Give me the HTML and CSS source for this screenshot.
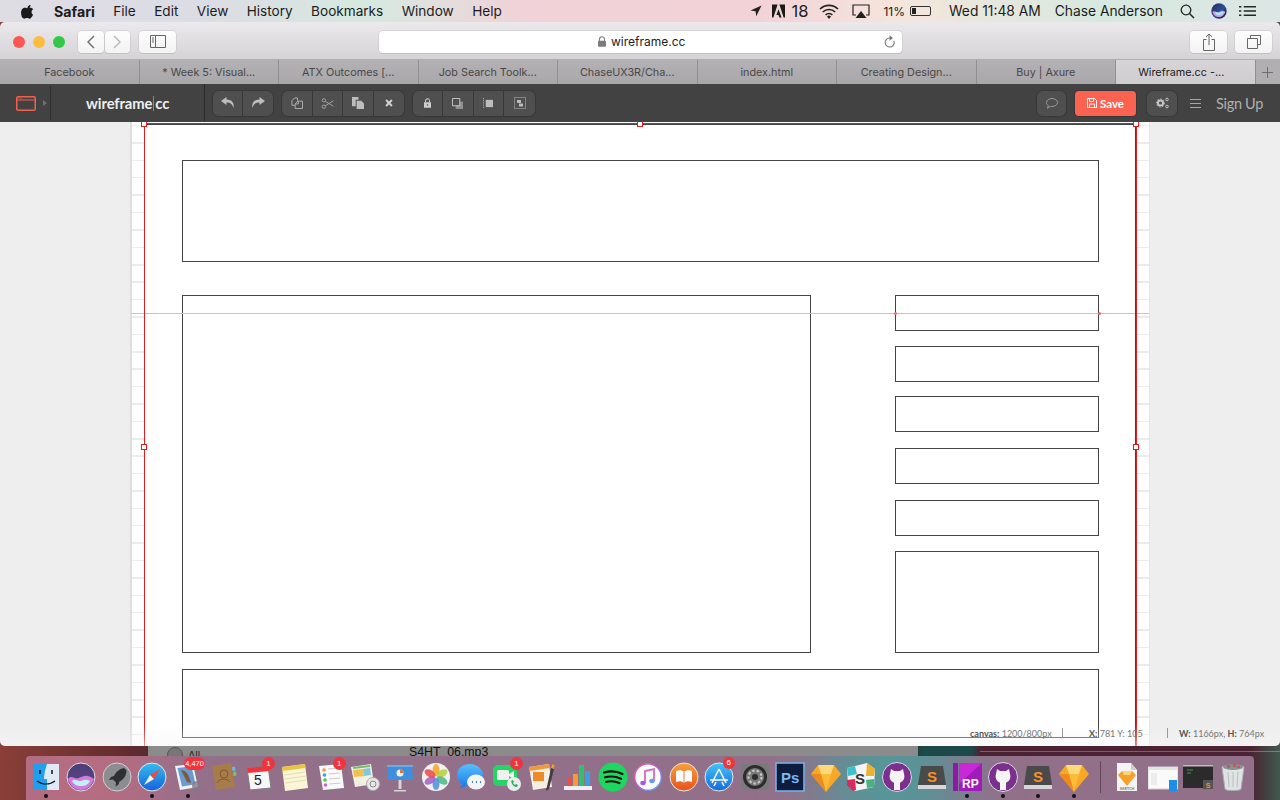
FILE: index.html
```html
<!DOCTYPE html>
<html lang="en">
<head>
<meta charset="utf-8">
<title>wireframe.cc</title>
<link rel="stylesheet" href="styles.css">
</head>
<body>
<header class="menubar">
  <svg class="apple" viewBox="0 0 14 16"><path d="M10.2 1c.1 1-.3 1.900-.9 2.600-.6.700-1.500 1.200-2.400 1.100-.1-1 .4-1.900.9-2.500C8.400 1.500 9.400 1 10.200 1zM13 11.400c-.4.900-.6 1.300-1.100 2-.7 1.100-1.600 2.400-2.800 2.400-1 0-1.300-.7-2.700-.7s-1.700.7-2.800.7c-1.200 0-2.100-1.200-2.800-2.200C-.1 10.800-.3 7.500.9 5.800c.8-1.200 2.100-1.900 3.300-1.900s2 .7 3 .7 1.600-.7 3-.7c1.100 0 2.200.6 3 1.600-2.600 1.500-2.200 5.200-.2 5.900z"/></svg>
  <nav class="menus">
    <b>Safari</b><span>File</span><span>Edit</span><span>View</span><span>History</span><span>Bookmarks</span><span>Window</span><span>Help</span>
  </nav>
  <div class="status">
    <svg class="st-loc" viewBox="0 0 12 12"><path d="M11.500.5L.5 5.500l5 .8.800 5z"/></svg>
    <svg class="st-adobe" viewBox="0 0 14 14"><path d="M0 0h6L1.500 14H0zM8 0h6v14h-1.500zM7 5l3.300 9H8l-1-2.700H4.700z"/></svg>
    <span class="st-count">18</span>
    <svg class="st-wifi" viewBox="0 0 20 15"><path d="M1 5a13 13 0 0 1 18 0M3.800 8a9 9 0 0 1 12.400 0M6.600 11a5 5 0 0 1 6.800 0" fill="none" stroke="#222" stroke-width="1.700"/><path d="M10 15l-2-2.500a3 3 0 0 1 4 0z" fill="#222"/></svg>
    <svg class="st-air" viewBox="0 0 18 15"><path d="M4 11H1V1h16v10h-3" fill="none" stroke="#222" stroke-width="1.200"/><path d="M9 7l5.500 7h-11z" fill="#222"/></svg>
    <span class="st-pct">11%</span>
    <span class="st-batt"><i></i></span>
    <span class="st-time">Wed 11:48 AM</span>
    <span class="st-user">Chase Anderson</span>
    <svg class="st-search" viewBox="0 0 15 15"><circle cx="6" cy="6" r="4.800" fill="none" stroke="#222" stroke-width="1.300"/><path d="M9.500 9.500L14 14" stroke="#222" stroke-width="1.500"/></svg>
    <svg class="st-siri" viewBox="0 0 16 16"><defs><linearGradient id="sg" x1="0" y1="0" x2="1" y2="1"><stop offset="0" stop-color="#2b2b55"/><stop offset=".55" stop-color="#2c4f9c"/><stop offset="1" stop-color="#0b0b20"/></linearGradient></defs><circle cx="8" cy="8" r="7.700" fill="url(#sg)"/><path d="M1.500 9c2-2.500 3.500 1.500 6.500 0s4-2 6.500 0c-2 4-4 5-6.500 5S3 13 1.500 9z" fill="#d89be0"/><path d="M4 9.500c2-1.500 3 1 4.500.3S11 8.500 12.500 9.500c-1 2-2.500 2.500-4.500 2.500S5 11.500 4 9.500z" fill="#9ff0ee"/></svg>
    <svg class="st-list" viewBox="0 0 18 12"><path d="M5 1.500h13M5 6h13M5 10.500h13" stroke="#1d2b26" stroke-width="1.600"/><path d="M0 1.500h2.500M0 6h2.500M0 10.500h2.500" stroke="#1d2b26" stroke-width="1.800"/></svg>
  </div>
</header>

<main class="window">
  <div class="browser-bar">
    <div class="lights"><i class="red"></i><i class="amber"></i><i class="green"></i></div>
    <div class="btn-pair">
      <button class="btn nav"><svg viewBox="0 0 10 16" width="10" height="16"><path d="M8 2L2 8l6 6" fill="none" stroke="#6b6b6b" stroke-width="1.400"/></svg></button>
      <button class="btn nav"><svg viewBox="0 0 10 16" width="10" height="16"><path d="M2 2l6 6-6 6" fill="none" stroke="#b5b5b5" stroke-width="1.400"/></svg></button>
    </div>
    <button class="btn side"><svg viewBox="0 0 16 13" width="16" height="13"><path d="M.5.500h15v12H.5zM5.500.500v12" fill="none" stroke="#666"/><path d="M2 3h2M2 5h2M2 7h2" stroke="#666"/></svg></button>
    <div class="address">
      <svg class="lock" viewBox="0 0 8 11" width="8" height="11"><path d="M1.500 5V3.200a2.500 2.500 0 0 1 5 0V5" fill="none" stroke="#7b7b7b" stroke-width="1.100"/><rect y="4.800" width="8" height="6" rx="1" fill="#7b7b7b"/></svg>
      <span>wireframe.cc</span>
      <svg class="reload" viewBox="0 0 14 16" width="12" height="14"><path d="M11.500 6.500A5.300 5.300 0 1 1 7 3.300" fill="none" stroke="#777" stroke-width="1.200"/><path d="M6.500 0l4 3.200-4 3.200z" fill="#777"/></svg>
    </div>
    <button class="btn share"><svg viewBox="0 0 12 18" width="12" height="18"><path d="M3.500 6.500H.5v11h11v-11h-3M6 12V1M3 3.800L6 1l3 2.800" fill="none" stroke="#666"/></svg></button>
    <button class="btn tabs-btn"><svg viewBox="0 0 14 14" width="14" height="14"><path d="M3.500 3.500V.5h10v9h-3M.5 3.500h10v10H.5z" fill="none" stroke="#666"/></svg></button>
  </div>

  <div class="tabbar">
    <div class="tab">Facebook</div>
    <div class="tab">* Week 5: Visual...</div>
    <div class="tab">ATX Outcomes [...</div>
    <div class="tab">Job Search Toolk...</div>
    <div class="tab">ChaseUX3R/Cha...</div>
    <div class="tab">index.html</div>
    <div class="tab">Creating Design...</div>
    <div class="tab">Buy | Axure</div>
    <div class="tab active">Wireframe.cc -...</div>
    <div class="tab-plus"><svg viewBox="0 0 11 11" width="11" height="11"><path d="M5.500 0v11M0 5.500h11" stroke="#6e6e6e"/></svg></div>
  </div>

  <div class="appbar">
    <div class="logo-cell">
      <svg class="logo-icon" viewBox="0 0 20 15" width="20" height="15"><rect x=".75" y=".75" width="18.500" height="13.500" rx="1.500" fill="none" stroke="#f0614f" stroke-width="1.500"/><path d="M1 4h18" stroke="#f0614f"/><path d="M2.500 2.400h1M4.500 2.400h1" stroke="#f0614f"/></svg>
      <svg class="logo-caret" viewBox="0 0 4 6" width="4" height="6"><path d="M0 0l4 3-4 3z" fill="#6f6f6f"/></svg>
    </div>
    <div class="brand">wireframe<i></i>cc</div>
    <div class="tools">
      <div class="group">
        <button class="tool t-a"><svg viewBox="0 0 14 12" width="14" height="12"><path d="M5.500 0L0 4l5.500 4V5.500c3.500 0 5.500.8 7 5.500 1-5-1.500-8.500-7-8.500z" fill="#bdbdbd"/></svg></button>
        <button class="tool t-a"><svg viewBox="0 0 14 12" width="14" height="12"><path d="M8.500 0L14 4 8.500 8V5.500c-3.500 0-5.500.8-7 5.500-1-5 1.500-8.500 7-8.500z" fill="#bdbdbd"/></svg></button>
      </div>
      <div class="group">
        <button class="tool t-b"><svg viewBox="0 0 13 13" width="12" height="12"><path d="M4 9H1V4l3-3h3v3M4.500 12.500h8v-8h-3l-2 0-3 3z" fill="none" stroke="#b5b5b5"/><path d="M5 7.500h3v-3" fill="none" stroke="#b5b5b5"/></svg></button>
        <button class="tool t-b"><svg viewBox="0 0 13 12" width="13" height="11"><circle cx="2.500" cy="2.500" r="1.800" fill="none" stroke="#a5a5a5"/><circle cx="2.500" cy="9.500" r="1.800" fill="none" stroke="#a5a5a5"/><path d="M4 3.500l9 5.500M4 8.500l9-5.500" stroke="#a5a5a5"/></svg></button>
        <button class="tool t-b"><svg viewBox="0 0 13 13" width="12" height="12"><path d="M0 0h7v3H4v7H0z" fill="#bdbdbd"/><path d="M5 4h5l3 3v6H5z" fill="#bdbdbd"/></svg></button>
        <button class="tool t-c"><svg viewBox="0 0 9 9" width="8" height="8"><path d="M1.200 1.200l6.600 6.600M7.800 1.200L1.200 7.800" stroke="#cfcfcf" stroke-width="2.300"/></svg></button>
      </div>
      <div class="group">
        <button class="tool t-b"><svg viewBox="0 0 9 12" width="7" height="10"><path d="M2 5V3a2.500 2.500 0 0 1 5 0v2" fill="none" stroke="#cfcfcf" stroke-width="1.300"/><path d="M0 5h9v7H0z" fill="#cfcfcf"/><circle cx="4.500" cy="8.500" r="1" fill="#4f4f4f"/></svg></button>
        <button class="tool t-b"><svg viewBox="0 0 12 12" width="11" height="11"><rect x="4" y="4" width="8" height="8" fill="#8f8f8f"/><path d="M.5.500h8v8h-8z" fill="#4f4f4f" stroke="#cfcfcf"/></svg></button>
        <button class="tool t-b"><svg viewBox="0 0 11 12" width="10" height="11"><path d="M.5 0v12" stroke="#bdbdbd" stroke-dasharray="1 1"/><rect x="3" y="2" width="8" height="8" fill="#bdbdbd"/></svg></button>
        <button class="tool t-d"><svg viewBox="0 0 12 12" width="12" height="12"><rect x=".5" y=".5" width="11" height="11" fill="none" stroke="#bdbdbd" stroke-dasharray="1 1"/><rect x="3" y="3" width="4" height="3" fill="#bdbdbd"/><rect x="5" y="6.500" width="4" height="3" fill="#bdbdbd"/></svg></button>
      </div>
    </div>
    <div class="actions">
      <button class="tool solo c-comment"><svg viewBox="0 0 12 11" width="12" height="11"><path d="M6 .5c3 0 5.500 1.700 5.500 4S9 8.500 6 8.500c-.6 0-1.200 0-1.700-.2L1.500 10.300l.8-2.800C1 6.800.5 5.700.5 4.500.5 2.200 3 .5 6 .5z" fill="none" stroke="#9a9a9a"/></svg></button>
      <button class="save"><svg viewBox="0 0 10 10" width="10" height="10"><path d="M.5.500h7l2 2v7H.5zM2.500.500v3h4v-3M2.500 9.500V6h5v3.500" fill="none" stroke="#fff" stroke-width=".9"/></svg>Save</button>
      <button class="tool solo c-gear"><svg viewBox="0 0 13 12" width="13" height="12"><circle cx="4.500" cy="6" r="2.600" fill="none" stroke="#c4c4c4" stroke-width="2"/><circle cx="4.500" cy="6" r="4" fill="none" stroke="#c4c4c4" stroke-width="1" stroke-dasharray="1.500 1.500"/><circle cx="11" cy="2.500" r="1.300" fill="none" stroke="#c4c4c4"/><circle cx="11" cy="9.500" r="1.300" fill="none" stroke="#c4c4c4"/></svg></button>
      <svg class="burger" viewBox="0 0 11 9" width="11" height="9"><path d="M0 .5h11M0 4.500h11M0 8.500h11" stroke="#a5a5a5"/></svg>
      <span class="signup">Sign Up</span>
    </div>
  </div>

  <section class="stage">
    <div class="board">
      <div class="guide"><i class="gd gd-l"></i><i class="gd gd-r"></i></div>
      <div class="wf wf-head"></div>
      <div class="wf wf-main"></div>
      <div class="wf wf-s1"></div>
      <div class="wf wf-s2"></div>
      <div class="wf wf-s3"></div>
      <div class="wf wf-s4"></div>
      <div class="wf wf-s5"></div>
      <div class="wf wf-s6"></div>
      <div class="wf wf-foot"></div>
      <div class="selection">
        <i class="h h-tl"></i><i class="h h-tc"></i><i class="h h-tr"></i><i class="h h-ml"></i><i class="h h-mr"></i>
      </div>
    </div>
    <footer class="readout">
      <span class="ro-canvas"><b>canvas:</b> 1200/800px</span>
      <span class="ro-xy"><b>X:</b> 781 Y: 105</span>
      <span class="ro-wh"><b>W:</b> 1166px, <b>H:</b> 764px</span>
    </footer>
  </section>
</main>

<div class="desk">
  <div class="back-window"><span class="bw-all"><i></i>All</span><span class="bw-file">S4HT_06.mp3</span></div>
  <div class="dock">
    <div class="slot on"><svg viewBox="0 0 30 30"><rect x="2" y="2" width="26" height="26" fill="#dfeaf5"/><path d="M2 2h14c-2 6-3 11-3 15h3v11H2z" fill="#1f9ff0"/><path d="M9 8v4M21 8v4" stroke="#111" stroke-width="1.500"/><path d="M6 19c5 4 13 4 18 0" fill="none" stroke="#111" stroke-width="1.200"/></svg></div>
    <div class="slot"><svg viewBox="0 0 30 30"><defs><linearGradient id="s1" x1="0" y1="0" x2="0" y2="1"><stop offset="0" stop-color="#4c3d78"/><stop offset="1" stop-color="#5a4a86"/></linearGradient></defs><circle cx="15" cy="15" r="14" fill="url(#s1)" stroke="#e0e0e4"/><path d="M2 17c4-5 6 1 11-1s8-4 15 1c-2 7-7 11-13 11S4 24 2 17z" fill="#d678dc"/><path d="M6 19c3-3 6 1 9 0s6-2 9 0c-2 4-5 5-9 5s-7-1-9-5z" fill="#bdf3f6"/></svg></div>
    <div class="slot"><svg viewBox="0 0 30 30"><circle cx="15" cy="15" r="14" fill="#8b8d90" stroke="#cfd0d2"/><path d="M22 6c-5 1-8 4-10 8l-3 1-2 3 4-.500 3 3-.5 4 3-2 1-3c4-2 7-6 7-11z" fill="#2e2f33"/></svg></div>
    <div class="slot on"><svg viewBox="0 0 30 30"><defs><linearGradient id="sa" x1="0" y1="0" x2="0" y2="1"><stop offset="0" stop-color="#33bdf3"/><stop offset="1" stop-color="#1762d9"/></linearGradient></defs><circle cx="15" cy="15" r="14" fill="url(#sa)" stroke="#e8e8ea"/><path d="M23 7l-10 6 4 4z" fill="#f04a3c"/><path d="M7 23l6-10 4 4z" fill="#f3f3f3"/></svg></div>
    <div class="slot on"><svg viewBox="0 0 30 30"><path d="M2 4l18-2 5 23-18 3z" fill="#eef3f8"/><path d="M4.500 6l14-1.700 4 18L9 24.500z" fill="#6c9ad0"/><path d="M8 8c5 0 8 5 10 13l-4-1-3-6z" fill="#7a5b3a"/><circle cx="24" cy="24" r="5" fill="#85798a" fill-opacity=".8"/></svg><b class="badge wide">4,470</b></div>
    <div class="slot"><svg viewBox="0 0 30 30"><path d="M4 4l19-3 4 24-19 3z" fill="#a77c4a"/><path d="M24 5l3-.4.500 4-3 .4z" fill="#6fb7d6"/><path d="M25 10l3-.4.500 4-3 .4z" fill="#7ac36b"/><circle cx="16" cy="12" r="4" fill="none" stroke="#7d5a31"/><path d="M9 21c2-5 10-5 13-1" fill="none" stroke="#7d5a31"/></svg></div>
    <div class="slot"><svg viewBox="0 0 30 30"><path d="M3 6l21-2 3 22-21 2z" fill="#f7f7f7" stroke="#7d7d7d"/><path d="M3 6l21-2 .8 5-21 2z" fill="#f0343c"/><text x="14" y="23" class="cal">5</text></svg><b class="badge">1</b></div>
    <div class="slot"><svg viewBox="0 0 30 30"><path d="M3 5l23-3 3 24-23 3z" fill="#fbf6d8"/><path d="M3 5l23-3 .5 4-23 3z" fill="#e9c53d"/><path d="M5 13l21-3M6 17l21-3M6.500 21l21-3" stroke="#e4dcb0"/></svg></div>
    <div class="slot"><svg viewBox="0 0 30 30"><path d="M4 4l22-2 3 24-21 2z" fill="#fafafa"/><circle cx="9" cy="8" r="1.800" fill="#f39b2b"/><circle cx="9.500" cy="13" r="1.800" fill="#2ea8e8"/><circle cx="10" cy="18" r="1.800" fill="#46c94a"/><circle cx="10.500" cy="23" r="1.800" fill="#c564d8"/><path d="M13 7l11-1M13.500 12l11-1M14 17l11-1M14.500 22l11-1" stroke="#ccc"/></svg><b class="badge">1</b></div>
    <div class="slot"><svg viewBox="0 0 30 30"><path d="M1 5l20-3 3 20-19 3z" fill="#f3efe3"/><path d="M3 8l10-1 1 7-10 1z" fill="#f3c04f"/><path d="M13 7l7-1 1 7-7 1z" fill="#7ec7e0"/><path d="M3 5l17-2 .3 2-17 2z" fill="#6fbf6a"/><circle cx="23" cy="22" r="6.500" fill="#e8e8e8" stroke="#aaa"/><circle cx="23" cy="22" r="3" fill="none" stroke="#888"/></svg></div>
    <div class="slot"><svg viewBox="0 0 30 30"><path d="M3 4h24l1 14H2z" fill="#3e8fdd"/><rect x="2" y="3" width="26" height="2" fill="#65afe8"/><circle cx="15" cy="11" r="3.500" fill="#f4f4f4"/><path d="M15 11V7.500a3.500 3.500 0 0 1 3.500 3.500z" fill="#e8703a"/><path d="M13.500 18h3v9h-3z" fill="#d4d4d4"/><path d="M9 28h12v1.500H9z" fill="#d4d4d4"/></svg></div>
    <div class="slot"><svg viewBox="0 0 30 30"><circle cx="15" cy="15" r="14" fill="#f2f2f2"/><g fill-opacity=".85"><ellipse cx="15" cy="8" rx="3.500" ry="6" fill="#f5a623"/><ellipse cx="21" cy="11.500" rx="3.500" ry="6" transform="rotate(60 21 11.500)" fill="#b7cf3a"/><ellipse cx="21" cy="18.500" rx="3.500" ry="6" transform="rotate(120 21 18.500)" fill="#49b98a"/><ellipse cx="15" cy="22" rx="3.500" ry="6" fill="#4c8fe0"/><ellipse cx="9" cy="18.500" rx="3.500" ry="6" transform="rotate(60 9 18.500)" fill="#a05fc4"/><ellipse cx="9" cy="11.500" rx="3.500" ry="6" transform="rotate(120 9 11.500)" fill="#e84a4a"/></g></svg></div>
    <div class="slot"><svg viewBox="0 0 30 30"><defs><linearGradient id="ms" x1="0" y1="0" x2="0" y2="1"><stop offset="0" stop-color="#58c0fb"/><stop offset="1" stop-color="#1679e8"/></linearGradient></defs><path d="M14 2C6 2 1 7 1 13c0 4 2 7 5 9-.3 1.500-1 3-2.500 4 3 0 5-1 6.500-2.500 1.500.5 3 .7 4 .7 8 0 13-5 13-11S21 2 14 2z" fill="url(#ms)"/><ellipse cx="20" cy="20" rx="9" ry="7.500" fill="#f4f4f4"/><path d="M16 20h1M20 20h1M24 20h1" stroke="#3a7fd5" stroke-width="2"/></svg></div>
    <div class="slot"><svg viewBox="0 0 30 30"><rect x="1" y="3" width="24" height="21" rx="5" fill="#26d367"/><rect x="5" y="8" width="12" height="10" rx="1.500" fill="#f0f0f0"/><path d="M17 12l5-3v8l-5-3z" fill="#f0f0f0"/><circle cx="22" cy="22" r="7" fill="#ececec"/><path d="M19 19c1 4 3 6 6 6l1-2-2-1-1 1c-1-.5-1.500-1.200-2-2l1-1-1-2z" fill="#26b655"/></svg><b class="badge">1</b></div>
    <div class="slot"><svg viewBox="0 0 30 30"><path d="M2 5l20-3 3 23-19 3z" fill="#f4eee3"/><path d="M2 5l20-3 .6 4-20 3z" fill="#ef9a3c"/><rect x="6" y="10" width="11" height="9" fill="#ef8a28"/><path d="M25 2l3 1-6 24-3 2z" fill="#3e3e3e"/><path d="M25 2l3 1-1 4-3-1z" fill="#ef9a3c"/></svg></div>
    <div class="slot"><svg viewBox="0 0 30 30"><path d="M1 24h28v4H1z" fill="#f0f0f0"/><rect x="4" y="16" width="5" height="8" fill="#ee4b4b"/><rect x="10" y="12" width="5" height="12" fill="#f29a38"/><rect x="16" y="3" width="5" height="21" fill="#2fc26b"/><rect x="22" y="9" width="5" height="15" fill="#3c9ee0"/></svg></div>
    <div class="slot"><svg viewBox="0 0 30 30"><circle cx="15" cy="15" r="14.500" fill="#1ed760"/><path d="M6 10.500c6-1.700 13-1.200 18.500 1.500M7 15.300c5-1.300 11-.9 16 1.400M8.200 19.800c4.500-1 9-.7 13.200 1.200" fill="none" stroke="#111" stroke-width="2.200" stroke-linecap="round"/></svg></div>
    <div class="slot"><svg viewBox="0 0 30 30"><defs><linearGradient id="it" x1="0" y1="0" x2="1" y2="1"><stop offset="0" stop-color="#f55a7a"/><stop offset=".5" stop-color="#b35be0"/><stop offset="1" stop-color="#3fb3f5"/></linearGradient></defs><circle cx="15" cy="15" r="13.300" fill="#fbfbfb" stroke="url(#it)" stroke-width="1.400"/><path d="M12 21V9l9-2v12" fill="none" stroke="#d868c0" stroke-width="1.800"/><ellipse cx="10" cy="21" rx="2.700" ry="2.200" fill="#a05be0"/><ellipse cx="19" cy="19" rx="2.700" ry="2.200" fill="#5ea0f0"/></svg></div>
    <div class="slot"><svg viewBox="0 0 30 30"><defs><linearGradient id="bk" x1="0" y1="0" x2="0" y2="1"><stop offset="0" stop-color="#f8a138"/><stop offset="1" stop-color="#e7511f"/></linearGradient></defs><circle cx="15" cy="15" r="14" fill="url(#bk)" stroke="#e6e6e6"/><path d="M15 10c-2-2-5-2-8-1v11c3-1 6-1 8 1 2-2 5-2 8-1V9c-3-1-6-1-8 1z" fill="#fafafa"/><path d="M15 10v11" stroke="#c98a5a"/></svg></div>
    <div class="slot"><svg viewBox="0 0 30 30"><defs><linearGradient id="as" x1="0" y1="0" x2="0" y2="1"><stop offset="0" stop-color="#41c4f7"/><stop offset="1" stop-color="#156ae0"/></linearGradient></defs><circle cx="15" cy="15" r="14" fill="url(#as)" stroke="#e6e6e6"/><path d="M15 7l7 14M15 7L8 21M6 18h18M10 24l2-4M20 24l-2-4" stroke="#fafafa" stroke-width="1.600" fill="none"/></svg><b class="badge small">6</b></div>
    <div class="slot"><svg viewBox="0 0 30 30"><rect x="1" y="2" width="28" height="26" rx="2" fill="#7a7a7a"/><circle cx="15" cy="15" r="10.500" fill="none" stroke="#2c2c2c" stroke-width="3"/><circle cx="15" cy="15" r="6.500" fill="none" stroke="#c8c8c8" stroke-width="2" stroke-dasharray="2.500 2"/><circle cx="15" cy="15" r="3" fill="#2c2c2c"/></svg></div>
    <div class="slot"><svg viewBox="0 0 30 30"><rect x="1" y="1" width="28" height="28" fill="#0e1c40" stroke="#78aee0" stroke-width="1.600"/><text x="6" y="21" class="ps">Ps</text></svg></div>
    <div class="slot"><svg viewBox="0 0 30 30"><path d="M7 3h16l7 9-15 18L0 12z" fill="#f8a825"/><path d="M7 3h16l-3 9H10z" fill="#fdd97a"/><path d="M10 12h10l-5 18z" fill="#fbbb3b"/><path d="M0 12h10l5 18z" fill="#ef8a1c"/></svg></div>
    <div class="slot"><svg viewBox="0 0 30 30"><path d="M1 6l20-5 8 6-1 18-19 4-7-6z" fill="#f4f4f4"/><path d="M1 6l8-2 2 8-9 2z" fill="#3fc1c9"/><path d="M21 1l8 6-1 7-8 0z" fill="#ecb22e"/><path d="M1 18l8-1 1 11-3 1-6-6z" fill="#d92a5e"/><path d="M20 18l8-1v8l-7 1z" fill="#4ab37d"/><text x="9" y="22" class="sl">S</text></svg></div>
    <div class="slot"><svg viewBox="0 0 30 30"><use href="#ghub"/></svg></div>
    <div class="slot"><svg viewBox="0 0 30 30"><use href="#subl"/></svg></div>
    <div class="slot on"><svg viewBox="0 0 30 30"><rect x="1" y="1" width="5" height="28" fill="#8f18a6"/><rect x="7" y="1" width="23" height="28" fill="#a01bba"/><path d="M7 1h23L7 22z" fill="#c928d8"/><text x="10" y="26" class="rp">RP</text></svg></div>
    <div class="slot on"><svg viewBox="0 0 30 30"><defs><g id="ghub"><circle cx="15" cy="15" r="14.500" fill="#7b2f8f" stroke="#d9d9de"/><path d="M9 7l3 2h6l3-2 1 5c1 3 0 7-3 8-1 .5-1 1-1 2v6h-6v-6c0-1 0-1.500-1-2-3-1-4-5-3-8z" fill="#f4f4f4"/></g><g id="subl"><path d="M4 4h22l3 19v4H1v-4z" fill="#4a4a4a"/><path d="M1 23h28v4H1z" fill="#d7d7d7"/><text x="10" y="20" class="su">S</text></g></defs><use href="#ghub"/></svg></div>
    <div class="slot on"><svg viewBox="0 0 30 30"><use href="#subl"/></svg></div>
    <div class="slot on"><svg viewBox="0 0 30 30"><path d="M7 3h16l7 9-15 18L0 12z" fill="#f8a825"/><path d="M7 3h16l-3 9H10z" fill="#fdd97a"/><path d="M10 12h10l-5 18z" fill="#fbbb3b"/><path d="M0 12h10l5 18z" fill="#ef8a1c"/></svg></div>
    <div class="sep"></div>
    <div class="slot"><svg viewBox="0 0 30 30"><path d="M5 1h14l6 7v21H5z" fill="#f4f4f4"/><path d="M19 1l6 7h-6z" fill="#cfcfcf"/><path d="M10 9h10l4 4-9 11-9-11z" fill="#f7a128"/><path d="M10 9h10l-2 4h-6z" fill="#fcd47a"/><text x="15" y="28" class="fl">SKETCH</text></svg></div>
    <div class="slot"><svg viewBox="0 0 30 30"><rect x="0" y="5" width="30" height="22" fill="#fafafa" stroke="#cfcfcf"/><rect x="0" y="5" width="30" height="3" fill="#e4e4e4"/><path d="M3 11h6v12H3z" fill="#ececec"/><rect x="21" y="18" width="8" height="11" fill="#1d8fe8"/></svg></div>
    <div class="slot"><svg viewBox="0 0 30 30"><rect x="0" y="3" width="30" height="23" fill="#2b2b2b"/><rect x="0" y="3" width="30" height="1.500" fill="#bdbdbd"/><path d="M4 8h6M4 11h4" stroke="#4d8f5a"/><rect x="20" y="18" width="10" height="9" fill="#555"/><text x="25" y="25.500" class="st">S</text></svg></div>
    <div class="slot"><svg viewBox="0 0 30 30"><path d="M4 5c0-2 22-2 22 0l-3 22c-.5 2-15.500 2-16 0z" fill="#dfe3e3" stroke="#a9b0b0"/><ellipse cx="15" cy="5" rx="10" ry="3" fill="#8a8f8f"/><path d="M9 3h3v3H9zM15 2h3v3h-3zM19 4h3v2h-3z" fill="#c65a5a"/><path d="M10 10l1 15M15 10v15M20 10l-1 15" stroke="#b9bebe"/></svg></div>
  </div>
</div>
</body>
</html>
```

FILE: styles.css
```css
* { box-sizing: border-box; }
html, body { margin: 0; padding: 0; }
body {
  width: 1280px;
  height: 800px;
  overflow: hidden;
  display: flex;
  flex-direction: column;
  font-family: "Inter", "Liberation Sans", sans-serif;
  background-color: #3a2230;
  background-image: linear-gradient(90deg, #8a3f38 0, #5a2a2e 148px, #2b2a33 900px, #1d4a48 925px, #1d4a48 972px, #4a2232 980px, #4a2232 1250px, #3f5a4e 1280px);
}
button { border: 0; padding: 0; font: inherit; }
i { display: block; }

/* menu bar */
.menubar {
  height: 22px;
  flex: none;
  display: flex;
  align-items: center;
  padding-left: 21px;
  font-size: 13.600px;
  color: #1c1c1c;
  background: linear-gradient(90deg, #dedde4 0, #dcdce4 200px, #d6e9e0 370px, #f0d2d8 520px, #f3d2d6 760px, #f5e6dc 900px, #d6e9e0 1100px, #dde6e4 1280px);
}
.apple { width: 13px; height: 15px; fill: #1a1a1a; }
.menus { display: flex; gap: 18.400px; margin-left: 20px; white-space: nowrap; }
.menus b { font-weight: 700; font-size: 14.200px; }
.status { margin-left: auto; display: flex; align-items: center; white-space: nowrap; padding-right: 24px; font-size: 13.800px; }
.st-loc { width: 12px; height: 12px; fill: #222; }
.st-adobe { width: 13px; height: 14px; margin-left: 10px; fill: #1a1a1a; }
.st-count { margin-left: 6px; font-size: 16.500px; }
.st-wifi { width: 20px; height: 15px; margin-left: 11px; }
.st-air { width: 18px; height: 15px; margin-left: 13px; }
.st-pct { margin-left: 13px; font-size: 12px; }
.st-batt { margin-left: 5px; width: 21px; height: 10px; border: 1px solid #333; border-radius: 2px; padding: 1px; }
.st-batt i { width: 4px; height: 6px; background: #222; }
.st-time { margin-left: 18px; }
.st-user { margin-left: 14px; }
.st-search { width: 15px; height: 15px; margin-left: 17px; }
.st-siri { width: 16px; height: 16px; margin-left: 16px; }
.st-list { width: 17px; height: 12px; margin-left: 12px; }

/* browser window */
.window {
  height: 724px;
  flex: none;
  display: flex;
  flex-direction: column;
  border-radius: 5px;
  overflow: hidden;
  position: relative;
  z-index: 2;
}
.browser-bar {
  height: 38px;
  flex: none;
  display: flex;
  align-items: center;
  padding: 2px 8px 0 13px;
  background: linear-gradient(#ebe9eb, #d5d3d5);
  border-bottom: 1px solid #b0aeb0;
}
.lights { display: flex; gap: 8px; }
.lights i { width: 12px; height: 12px; border-radius: 50%; }
.red { background: #fc5753; }
.amber { background: #fdbc40; }
.green { background: #34c84a; }
.btn {
  height: 22px;
  background: linear-gradient(#fdfdfd, #f3f3f3);
  border-radius: 4px;
  box-shadow: 0 0 0 .5px #c4c2c4, 0 1px 0 #bfbdbf;
  display: flex;
  align-items: center;
  justify-content: center;
}
.btn-pair { display: flex; gap: 1px; margin-left: 13px; }
.nav { width: 25.500px; }
.side { width: 37px; margin-left: 9px; }
.address {
  width: 523px;
  height: 22px;
  margin-left: 203px;
  background: #fff;
  border-radius: 4px;
  box-shadow: 0 0 0 .5px #c4c2c4, 0 1px 0 #bfbdbf;
  display: flex;
  align-items: center;
  padding-left: 219px;
  font-size: 12px;
  color: #222;
}
.lock { margin-right: 5px; }
.reload { margin-left: auto; margin-right: 6px; }
.share { width: 37px; margin-left: 288px; }
.tabs-btn { width: 37px; margin-left: 8px; }

.tabbar {
  height: 24px;
  flex: none;
  display: flex;
  background: linear-gradient(#b3b1b3, #a9a7a9);
  font-size: 10.800px;
  color: #484848;
}
.tab {
  width: 139.500px;
  flex: none;
  display: flex;
  align-items: center;
  justify-content: center;
  border-right: 1px solid #919091;
  white-space: nowrap;
}
.tab.active { background: linear-gradient(#d6d4d6, #cfcdcf); color: #1c1c1c; padding-right: 8px; }
.tab-plus { flex: 1; display: flex; align-items: center; justify-content: center; background: #b1afb1; }

/* app toolbar */
.appbar {
  height: 38px;
  flex: none;
  display: flex;
  align-items: center;
  background: #424242;
  color: #eee;
  font-family: "Lato", "Liberation Sans", sans-serif;
}
.logo-cell {
  width: 51px;
  height: 34px;
  flex: none;
  display: flex;
  align-items: center;
  padding-left: 16px;
  border-right: 1px solid #2c2c2c;
}
.logo-caret { margin-left: 7px; }
.brand {
  width: 154px;
  height: 38px;
  flex: none;
  display: flex;
  align-items: center;
  padding-left: 35px;
  font-size: 14.800px;
  font-weight: 700;
  border-right: 1px solid #2c2c2c;
  letter-spacing: -.1px;
}
.brand i { width: 1px; height: 15px; background: #e8604e; margin: 0 1px; }
.tools { display: flex; gap: 9px; margin-left: 8px; }
.group { display: flex; height: 25px; border-radius: 6px; overflow: hidden; box-shadow: 0 0 0 1px #383838; }
.tool {
  height: 25px;
  background: #4f4f4f;
  display: flex;
  align-items: center;
  justify-content: center;
  border-right: 1px solid #383838;
  flex: none;
}
.tool:last-child { border-right: 0; }
.t-a { width: 30px; }
.t-b { width: 30.500px; }
.t-c { width: 30px; }
.t-d { width: 31px; }
.actions { margin-left: auto; display: flex; align-items: center; padding-right: 17px; }
.solo { border-radius: 6px; border: 0; box-shadow: 0 0 0 1px #383838; }
.c-comment { width: 29px; }
.c-gear { width: 30px; margin-left: 11px; }
.save {
  width: 61px;
  height: 25px;
  margin-left: 9px;
  background: #fb6350;
  color: #fff;
  border-radius: 4px;
  font-family: "Lato", "Liberation Sans", sans-serif;
  font-size: 11.500px;
  font-weight: 700;
  display: flex;
  align-items: center;
  justify-content: center;
  gap: 3px;
  box-shadow: 0 0 0 1px #383838;
}
.burger { margin-left: 13px; }
.signup { margin-left: 15px; font-size: 14.500px; color: #b0b0b0; letter-spacing: -.3px; width: 47px; white-space: nowrap; }

/* canvas */
.stage { flex: 1; position: relative; background: #eee; overflow: hidden; }
.board {
  position: absolute;
  left: 130px;
  top: 0;
  width: 1020px;
  height: 624px;
  background-color: #fff;
  background-image: repeating-linear-gradient(180deg, transparent 2.900px, #ebebeb 2.900px, #ebebeb 4.300px, transparent 4.300px, transparent 20.300px);
  border-left: 2px solid #dedede;
  border-right: 1px solid #e4e4e4;
}
.board::before {
  content: "";
  position: absolute;
  left: 12px;
  top: 1px;
  width: 993px;
  bottom: 0;
  background: #fff;
}
.wf { position: absolute; border: 1px solid #444; background: transparent; }
.wf-head { left: 50px; top: 38px; width: 917px; height: 102px; }
.wf-main { left: 50px; top: 173px; width: 629px; height: 358px; }
.wf-s1 { left: 763px; top: 173px; width: 204px; height: 36px; }
.wf-s2 { left: 763px; top: 224px; width: 204px; height: 36px; }
.wf-s3 { left: 763px; top: 274px; width: 204px; height: 36px; }
.wf-s4 { left: 763px; top: 326px; width: 204px; height: 36px; }
.wf-s5 { left: 763px; top: 378px; width: 204px; height: 36px; }
.wf-s6 { left: 763px; top: 429px; width: 204px; height: 102px; }
.wf-foot { left: 50px; top: 547px; width: 917px; height: 69px; }
.guide { position: absolute; left: -1px; right: 0; top: 191px; height: 1px; background: #f5b0ab; z-index: 1; }
.gd { position: absolute; top: -1px; width: 3px; height: 3px; border-radius: 50%; background: #ec6a64; }
.gd-l { left: 763px; }
.gd-r { left: 967px; }
.selection {
  position: absolute;
  left: 12px;
  top: 1px;
  width: 993px;
  height: 640px;
  border: 1px solid #e31c1c;
  border-bottom: 0;
  box-shadow: inset 0 1px 0 #444, inset -1px 0 0 #444;
  z-index: 2;
}
.h { position: absolute; width: 6px; height: 6px; background: #fff; border: 1px solid #e31c1c; }
.h-tl { left: -4px; top: -3px; }
.h-tc { left: 492px; top: -3px; }
.h-tr { right: -3px; top: -3px; }
.h-ml { left: -4px; top: 320px; }
.h-mr { right: -3px; top: 320px; }
.readout {
  position: absolute;
  left: 0;
  right: 0;
  bottom: 0;
  height: 21px;
  background: linear-gradient(rgba(255,255,255,0), rgba(245,245,245,.55));
  font-family: "Lato", "Liberation Sans", sans-serif;
  font-size: 9px;
  color: #777;
  z-index: 3;
}
.readout b { color: #555; font-weight: 700; }
.readout span { position: absolute; top: 3px; white-space: nowrap; }
.ro-canvas { left: 970px; }
.ro-xy { left: 1089px; }
.ro-wh { left: 1179px; }
.ro-canvas::after, .ro-xy::after {
  content: "";
  position: absolute;
  top: 0;
  height: 10px;
  width: 1px;
  background: #999;
}
.ro-canvas::after { left: 92px; }
.ro-xy::after { left: 78px; }

/* desktop and dock */
.desk { flex: 1; position: relative; display: flex; align-items: flex-end; padding: 0 26px; }
.desk::before {
  content: "";
  position: absolute;
  left: 980px;
  right: 0;
  top: 5px;
  height: 1px;
  background: rgba(255,255,255,.28);
}
.back-window {
  position: absolute;
  left: 148px;
  top: -2px;
  width: 770px;
  height: 14px;
  background: #8b8b8b;
  font-family: "Liberation Sans", sans-serif;
  font-size: 12.300px;
  color: #111;
}
.bw-all { position: absolute; left: 19px; top: 3px; display: flex; align-items: center; gap: 5px; font-size: 11px; color: #333; }
.bw-all i { width: 16px; height: 16px; border-radius: 50%; background: #777; border: 1px solid #555; }
.bw-file { position: absolute; left: 261px; top: 1px; }
.dock {
  flex: none;
  width: 1228px;
  height: 44px;
  padding-left: 2.300px;
  display: flex;
  position: relative;
  z-index: 3;
  overflow: hidden;
  border-radius: 4px 4px 0 0;
  background: #93708a;
}
.dock::before {
  content: "";
  position: absolute;
  left: 800px;
  width: 130px;
  top: -30px;
  bottom: -30px;
  background: #4f9a9a;
  filter: blur(30px);
}
.dock::after {
  content: "";
  position: absolute;
  left: -40px;
  width: 170px;
  top: -30px;
  bottom: -30px;
  background: #b96c80;
  filter: blur(30px);
}
.slot {
  width: 35.450px;
  height: 44px;
  flex: none;
  position: relative;
  z-index: 1;
  display: flex;
  flex-direction: column;
  align-items: center;
  padding-top: 6px;
}
.slot svg { width: 30px; height: 30px; flex: none; }
.slot.on::after { content: ""; width: 4px; height: 4px; margin-top: 2px; border-radius: 50%; background: #111; }
.sep { width: 18px; flex: none; height: 32px; margin-top: 5px; position: relative; z-index: 1; }
.sep::after { content: ""; position: absolute; left: 9px; top: 0; bottom: 0; width: 1px; background: #5f4858; }
.badge {
  position: absolute;
  top: 1px;
  left: 21px;
  width: 13px;
  height: 13px;
  border-radius: 7px;
  background: #f0343c;
  color: #fff;
  font-family: "Liberation Sans", sans-serif;
  font-size: 8px;
  font-weight: 400;
  line-height: 13px;
  text-align: center;
}
.badge.wide { left: 14px; width: 21px; font-size: 7.500px; }
.badge.small { width: 12px; height: 12px; line-height: 12px; }
.cal { font: 400 14px "Liberation Sans", sans-serif; fill: #222; text-anchor: middle; }
.ps { font: 700 15px "Liberation Sans", sans-serif; fill: #7fb8ea; }
.sl { font: 700 15px "Liberation Sans", sans-serif; fill: #333; }
.rp { font: 700 12px "Liberation Sans", sans-serif; fill: #fff; }
.su { font: 700 15px "Liberation Sans", sans-serif; fill: #f7922a; }
.fl { font: 700 3.500px "Liberation Sans", sans-serif; fill: #777; text-anchor: middle; }
.st { font: 700 7px "Liberation Sans", sans-serif; fill: #f7922a; text-anchor: middle; }
```
